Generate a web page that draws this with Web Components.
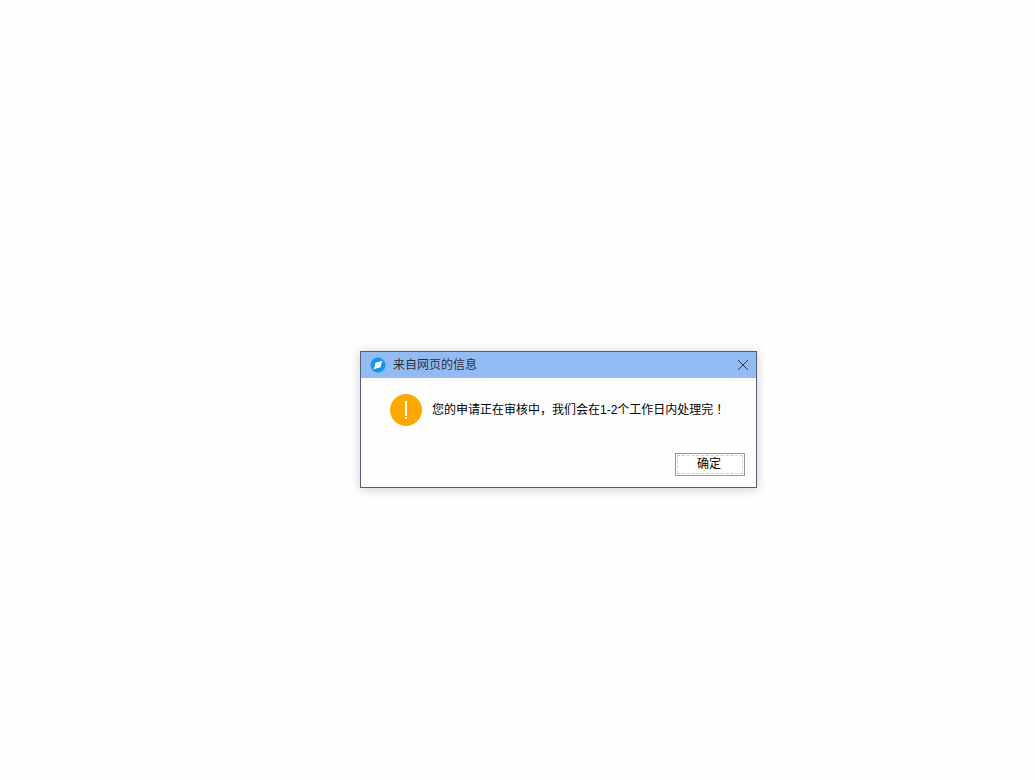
<!DOCTYPE html>
<html lang="zh-CN">
<head>
<meta charset="utf-8">
<title>来自网页的信息</title>
<style>
  body {
    margin: 0;
    background: #fefefe;
    color: #000;
    font: 12px/16px "Liberation Sans", "Noto Sans CJK SC", sans-serif;
  }
  .centered-mark { font-family: "Liberation Sans", "Noto Sans CJK TC", sans-serif; }
</style>
</head>
<body>
<dialog-stage>
  <message-dialog heading="来自网页的信息">
    <alert-icon slot="icon"></alert-icon>
    您的申请正在审核中，我们会在1-2个工作日内处理完<span class="centered-mark" lang="zh-TW">！</span>
    <dialog-button slot="actions">确定</dialog-button>
  </message-dialog>
</dialog-stage>

<script>
  class BaseElement extends HTMLElement {
    constructor() {
      super();
      this.attachShadow({ mode: "open" }).innerHTML = this.constructor.markup;
    }
  }

  customElements.define("dialog-stage", class extends BaseElement {
    static markup = `
      <style>
        :host {
          display: flex;
          align-items: center;
          justify-content: center;
          box-sizing: border-box;
          min-height: 100vh;
          padding: 59px 0 0 82px;
        }
      </style>
      <slot></slot>`;
  });

  customElements.define("browser-logo", class extends BaseElement {
    static markup = `
      <style>
        :host { display: block; width: 16px; height: 16px; }
        svg { display: block; }
      </style>
      <svg width="16" height="16" viewBox="0 0 16 16" aria-hidden="true">
        <circle cx="8" cy="8" r="7.5" fill="#1296e6"/>
        <path d="M12.6 3.6 11.4 6 10.9 9.2Q10.6 10.6 9.2 10.8L6 11.4 3.4 12.4 4.6 9.8 5.1 6.8Q5.4 5.4 6.8 5.2L9.8 4.8Z" fill="#fff"/>
      </svg>`;
  });

  customElements.define("alert-icon", class extends BaseElement {
    static markup = `
      <style>
        :host { display: block; width: 32px; height: 32px; }
        svg { display: block; }
      </style>
      <svg width="32" height="32" viewBox="0 0 32 32" role="img" aria-label="警告">
        <circle cx="16" cy="16" r="16" fill="#ffa800"/>
        <path d="M15 7h2v15h-2zM15 23h2v2h-2z" fill="#fff"/>
      </svg>`;
  });

  customElements.define("dialog-button", class extends BaseElement {
    static markup = `
      <style>
        :host { display: block; }
        button {
          display: block;
          box-sizing: border-box;
          width: 70px;
          height: 23px;
          padding: 1px;
          border: 1px solid #999;
          background: #fff;
          color: inherit;
          font: inherit;
        }
        span {
          display: block;
          box-sizing: border-box;
          height: 19px;
          border: 1px dashed #ccd0da;
          padding-right: 2px;
        }
      </style>
      <button type="button"><span><slot></slot></span></button>`;
  });

  customElements.define("message-dialog", class extends BaseElement {
    static markup = `
      <style>
        :host {
          display: block;
          box-sizing: border-box;
          width: 397px;
          max-width: 100%;
          border: 1px solid #535f78;
          background: #fefefe;
          box-shadow: 0 1px 10px rgba(0, 0, 0, .2);
        }
        header {
          display: flex;
          align-items: center;
          gap: 7px;
          height: 26px;
          padding: 0 8px 0 9px;
          background: #93bbf3;
          color: #2a303c;
        }
        h1 { flex: 1; margin: 0; font: inherit; }
        .close {
          display: block;
          padding: 0;
          border: 0;
          background: none;
          color: #30343c;
        }
        .close svg { display: block; }
        .body {
          display: flex;
          align-items: center;
          gap: 10px;
          padding: 16px 29px 0;
        }
        p { margin: 0; }
        footer {
          display: flex;
          justify-content: flex-end;
          padding: 27px 11px 11px;
        }
      </style>
      <header>
        <browser-logo></browser-logo>
        <h1></h1>
        <button class="close" type="button" aria-label="关闭">
          <svg width="10" height="10" viewBox="0 0 10 10" aria-hidden="true">
            <path d="M0 0l10 10M10 0l-10 10" stroke="currentColor" stroke-width="1"/>
          </svg>
        </button>
      </header>
      <div class="body"><slot name="icon"></slot><p><slot></slot></p></div>
      <footer><slot name="actions"></slot></footer>`;

    connectedCallback() {
      this.setAttribute("role", "dialog");
      this.setAttribute("aria-label", this.getAttribute("heading"));
      this.shadowRoot.querySelector("h1").textContent = this.getAttribute("heading");
    }
  });
</script>
</body>
</html>
